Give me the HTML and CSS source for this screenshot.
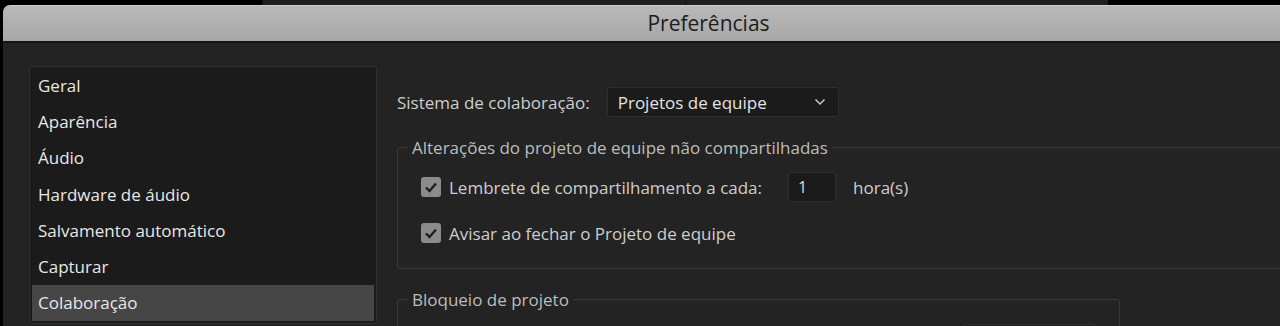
FILE: index.html
```html
<!DOCTYPE html>
<html lang="pt">
<head>
  <meta charset="UTF-8">
  <meta name="viewport" content="width=device-width, initial-scale=1.0">
  <title>Preferências</title>
  <link rel="stylesheet" href="styles.css">
</head>
<body>
  <div class="top-strip">
    <div class="strip-gap"></div>
    <div class="strip-tab"></div>
    <div class="strip-tab"></div>
  </div>

  <div class="window">
    <div class="title-bar">Preferências</div>

    <div class="content">
      <!-- Categories -->
      <ul class="sidebar">
        <li>Geral</li>
        <li>Aparência</li>
        <li>Áudio</li>
        <li>Hardware de áudio</li>
        <li>Salvamento automático</li>
        <li>Capturar</li>
        <li class="selected">Colaboração</li>
      </ul>

      <div class="main">
        <div class="system-row">
          <span class="label">Sistema de colaboração:</span>
          <div class="dropdown">
            <span>Projetos de equipe</span>
            <svg class="chevron" width="12" height="8" viewBox="0 0 12 8">
              <path d="M1.5 1.5 L6 6 L10.5 1.5" fill="none" stroke="#c9c9c9" stroke-width="1.5"/>
            </svg>
          </div>
        </div>

        <fieldset class="group group-wide">
          <legend>Alterações do projeto de equipe não compartilhadas</legend>
          <div class="check-row">
            <span class="checkbox">
              <svg width="20" height="20" viewBox="0 0 20 20"><path d="M5 10.5 L8.5 14 L15 6.5" fill="none" stroke="#1e1e1e" stroke-width="2.4"/></svg>
            </span>
            <span class="label">Lembrete de compartilhamento a cada:</span>
            <div class="number-box">1</div>
            <span class="label">hora(s)</span>
          </div>
          <div class="check-row">
            <span class="checkbox">
              <svg width="20" height="20" viewBox="0 0 20 20"><path d="M5 10.5 L8.5 14 L15 6.5" fill="none" stroke="#1e1e1e" stroke-width="2.4"/></svg>
            </span>
            <span class="label">Avisar ao fechar o Projeto de equipe</span>
          </div>
        </fieldset>

        <fieldset class="group group-lock">
          <legend>Bloqueio de projeto</legend>
          <div class="check-row">
            <span class="checkbox"></span>
            <span class="lock-spacer"></span>
            <div class="name-box"></div>
          </div>
        </fieldset>
      </div>
    </div>
  </div>
</body>
</html>
```

FILE: styles.css
```css
html, body {
  margin: 0;
  padding: 0;
  height: 326px;
  overflow: hidden;
  background-color: #000;
  font-family: "Open Sans", Lato, sans-serif;
}

/* Strip of the app behind the dialog */
.top-strip {
  height: 5px;
  display: flex;
  background-color: #000;
}

.strip-gap {
  width: 262px;
}

.strip-tab {
  width: 422px;
  background-color: #1e1e1e;
  border-left: 1px solid #111;
}

.window {
  margin-left: 3px;
  background-color: #232323;
  height: 321px;
  border-top-left-radius: 7px;
  overflow: hidden;
}

.title-bar {
  height: 35px;
  line-height: 35px;
  text-align: center;
  font-size: 21px;
  color: #1c1c1c;
  background: linear-gradient(#b9b9b9, #a7a7a7);
  border-top: 1px solid #cfcfcf;
  border-bottom: 2px solid #141414;
  padding-left: 134px;
}

.content {
  display: flex;
  align-items: flex-start;
}

/* Left category list */
.sidebar {
  list-style: none;
  margin: 23px 0 0 26px;
  padding: 1px 2px 2px;
  width: 342px;
  background-color: #1b1b1b;
  border: 1px solid #303030;
  border-radius: 3px;
  flex-shrink: 0;
}

.sidebar li {
  height: 36.2px;
  line-height: 36.2px;
  padding-left: 6px;
  font-size: 17px;
  color: #e8e8e8;
}

.sidebar li.selected {
  background-color: #464646;
}

/* Right side */
.main {
  margin-left: 20px;
  flex: 1;
}

.label {
  font-size: 17px;
  color: #cecece;
}

.system-row {
  display: flex;
  align-items: center;
  margin-top: 44px;
}

.dropdown {
  margin-left: 17px;
  width: 210px;
  height: 28px;
  padding: 0 10px;
  display: flex;
  align-items: center;
  justify-content: space-between;
  background-color: #1b1b1b;
  border: 1px solid #2f2f2f;
  border-radius: 3px;
  font-size: 17px;
  color: #e4e4e4;
}

.chevron {
  margin-right: 2px;
}

.group {
  margin: 0;
  padding: 0 0 20px 10px;
  border: 1px solid #3a3a3a;
  border-radius: 3px;
}

.group legend {
  padding: 0 4px;
  font-size: 17px;
  color: #bdbdbd;
}

.group-wide {
  margin-top: 19px;
  width: 940px;
}

.group-lock {
  margin-top: 19px;
  width: 711px;
}

.check-row {
  display: flex;
  align-items: center;
  height: 30px;
  margin: 13px 0 0 13px;
}

.check-row + .check-row {
  margin-top: 16px;
}

.checkbox {
  width: 20px;
  height: 20px;
  border-radius: 3px;
  background-color: #8b8b8b;
  margin-right: 8px;
  display: flex;
}

.number-box {
  margin: 0 17px 0 26px;
  width: 37px;
  height: 28px;
  line-height: 28px;
  padding-left: 9px;
  background-color: #1a1a1a;
  border: 1px solid #2f2f2f;
  border-radius: 3px;
  font-size: 16px;
  color: #dcdcdc;
}

.lock-spacer {
  width: 515px;
}

.name-box {
  width: 130px;
  height: 28px;
  background-color: #1a1a1a;
  border: 1px solid #333;
  border-radius: 3px;
}
```
